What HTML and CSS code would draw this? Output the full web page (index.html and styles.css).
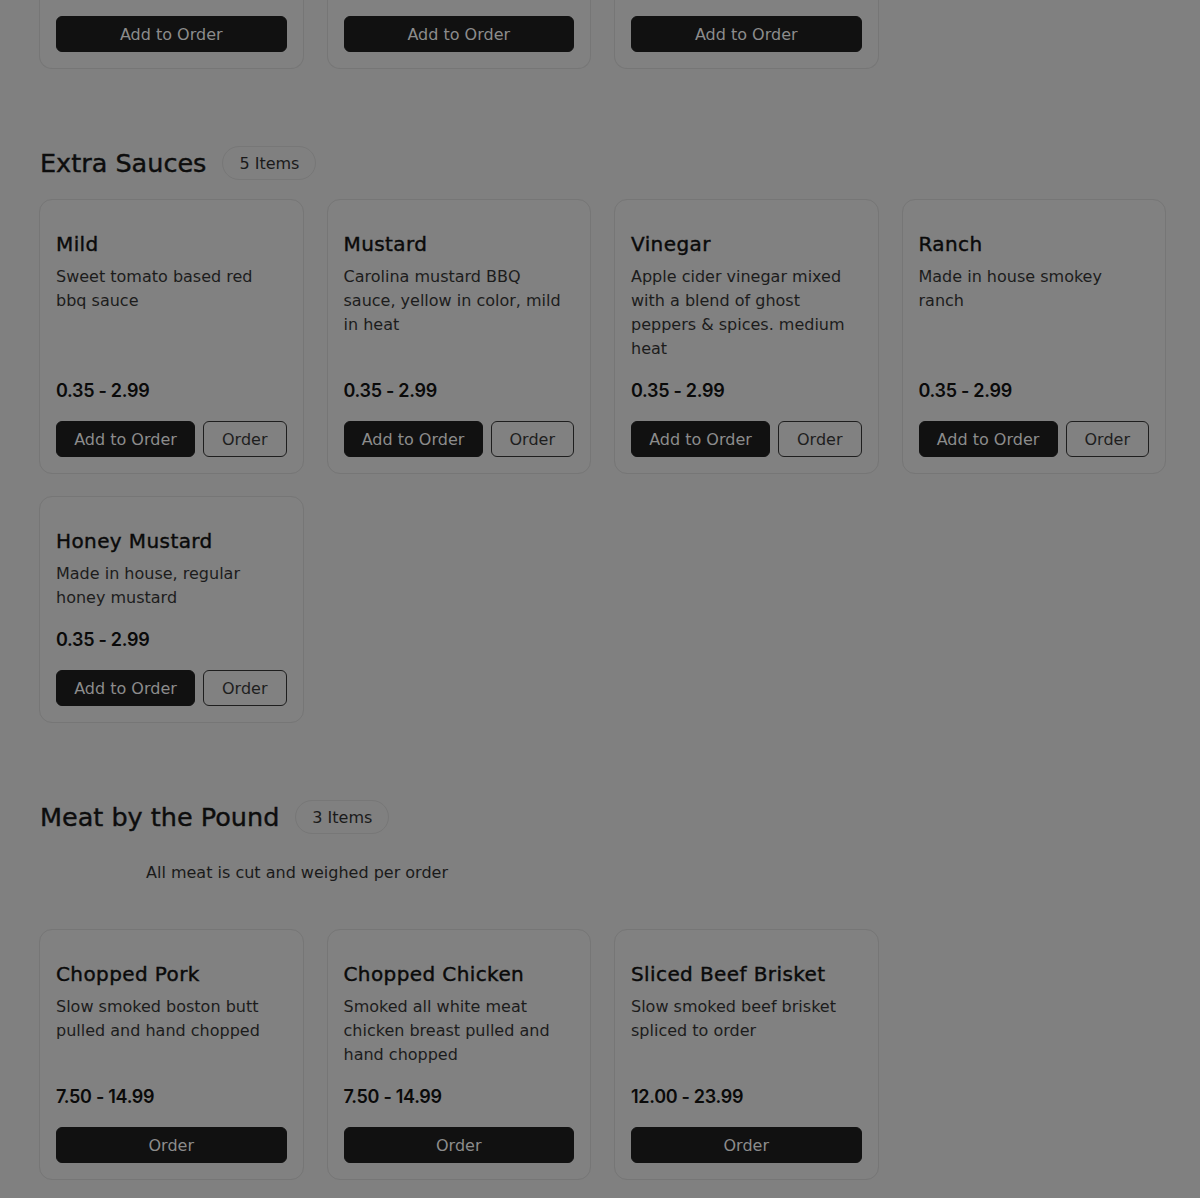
FILE: index.html
```html
<!DOCTYPE html>
<html lang="en">
<head>
<meta charset="utf-8">
<title>Menu</title>
<link rel="stylesheet" href="styles.css">
</head>
<body>
<main class="menu">
  <section class="section section-top">
    <div class="grid">
      <div class="card card-cut"><button class="btn btn-solid btn-full">Add to Order</button></div>
      <div class="card card-cut"><button class="btn btn-solid btn-full">Add to Order</button></div>
      <div class="card card-cut"><button class="btn btn-solid btn-full">Add to Order</button></div>
    </div>
  </section>

  <section class="section">
    <div class="section-head">
      <h2 class="section-title">Extra Sauces</h2>
      <span class="badge">5 Items</span>
    </div>
    <div class="grid">
      <article class="card">
        <h3 class="item-name">Mild</h3>
        <p class="item-desc">Sweet tomato based red bbq sauce</p>
        <div class="item-price">0.35 - 2.99</div>
        <div class="actions"><button class="btn btn-solid">Add to Order</button><button class="btn btn-outline">Order</button></div>
      </article>
      <article class="card">
        <h3 class="item-name">Mustard</h3>
        <p class="item-desc">Carolina mustard BBQ sauce, yellow in color, mild in heat</p>
        <div class="item-price">0.35 - 2.99</div>
        <div class="actions"><button class="btn btn-solid">Add to Order</button><button class="btn btn-outline">Order</button></div>
      </article>
      <article class="card">
        <h3 class="item-name">Vinegar</h3>
        <p class="item-desc">Apple cider vinegar mixed with a blend of ghost peppers &amp; spices. medium heat</p>
        <div class="item-price">0.35 - 2.99</div>
        <div class="actions"><button class="btn btn-solid">Add to Order</button><button class="btn btn-outline">Order</button></div>
      </article>
      <article class="card">
        <h3 class="item-name">Ranch</h3>
        <p class="item-desc">Made in house smokey ranch</p>
        <div class="item-price">0.35 - 2.99</div>
        <div class="actions"><button class="btn btn-solid">Add to Order</button><button class="btn btn-outline">Order</button></div>
      </article>
      <article class="card">
        <h3 class="item-name">Honey Mustard</h3>
        <p class="item-desc">Made in house, regular honey mustard</p>
        <div class="item-price">0.35 - 2.99</div>
        <div class="actions"><button class="btn btn-solid">Add to Order</button><button class="btn btn-outline">Order</button></div>
      </article>
    </div>
  </section>

  <section class="section">
    <div class="section-head">
      <h2 class="section-title">Meat by the Pound</h2>
      <span class="badge">3 Items</span>
    </div>
    <p class="section-note">All meat is cut and weighed per order</p>
    <div class="grid">
      <article class="card">
        <h3 class="item-name">Chopped Pork</h3>
        <p class="item-desc">Slow smoked boston butt pulled and hand chopped</p>
        <div class="item-price">7.50 - 14.99</div>
        <div class="actions actions-single"><button class="btn btn-solid btn-full">Order</button></div>
      </article>
      <article class="card">
        <h3 class="item-name">Chopped Chicken</h3>
        <p class="item-desc">Smoked all white meat chicken breast pulled and hand chopped</p>
        <div class="item-price">7.50 - 14.99</div>
        <div class="actions actions-single"><button class="btn btn-solid btn-full">Order</button></div>
      </article>
      <article class="card">
        <h3 class="item-name">Sliced Beef Brisket</h3>
        <p class="item-desc">Slow smoked beef brisket spliced to order</p>
        <div class="item-price">12.00 - 23.99</div>
        <div class="actions actions-single"><button class="btn btn-solid btn-full">Order</button></div>
      </article>
    </div>
  </section>
</main>
</body>
</html>
```
FILE: styles.css
```css
* { box-sizing: border-box; }
html, body { margin: 0; padding: 0; }
body {
  background: #808080;
  font-family: "DejaVu Sans", "Noto Sans", sans-serif;
  color: #0f0f0f;
  height: 1198px;
  overflow: hidden;
}
.menu {
  width: 1127px;
  margin-left: 39px;
}
.section { padding-top: 77px; }
.section-top { padding-top: 0; }
.grid {
  display: grid;
  grid-template-columns: repeat(4, 1fr);
  gap: 22px 23px;
}
.card {
  border: 1px solid #767676;
  border-radius: 13px;
  background: #818181;
  padding: 30px 16px 16px;
  display: flex;
  flex-direction: column;
}
.card-cut {
  border-top: none;
  border-top-left-radius: 0;
  border-top-right-radius: 0;
  padding-top: 16px;
}
.section-head {
  display: flex;
  align-items: center;
  gap: 16px;
  margin-bottom: 19px;
  padding-left: 1px;
}
.section-title {
  margin: 0;
  font-size: 25.5px;
  font-weight: 400;
  line-height: 34px;
  color: #0d0d0d;
  -webkit-text-stroke: 0.4px #0d0d0d;
}
.badge {
  display: inline-flex;
  align-items: center;
  height: 34px;
  padding: 0 16px;
  border: 1px solid #777;
  border-radius: 999px;
  font-size: 16px;
  color: #1a1a1a;
}
.section-note {
  margin: 27px 0 44px 107px;
  font-size: 16px;
  line-height: 24px;
  color: #1a1a1a;
}
.item-name {
  margin: 0;
  font-size: 20px;
  line-height: 28px;
  font-weight: 400;
  letter-spacing: 0.4px;
  color: #0a0a0a;
  -webkit-text-stroke: 0.4px #0a0a0a;
}
.item-desc {
  margin: 7px 0 0;
  font-size: 16px;
  line-height: 24px;
  color: #1c1c1c;
}
.item-price {
  margin-top: auto;
  padding-top: 18px;
  font-family: Inter, "DejaVu Sans", sans-serif;
  font-size: 18px;
  line-height: 24px;
  font-weight: 600;
  letter-spacing: -0.3px;
  color: #0a0a0a;
}
.actions {
  margin-top: 18px;
  display: grid;
  grid-template-columns: 139px 1fr;
  gap: 8px;
}
.actions-single { grid-template-columns: 1fr; }
.btn {
  height: 36px;
  border-radius: 6px;
  font-family: inherit;
  font-size: 16px;
  padding: 0;
  cursor: pointer;
}
.btn-solid {
  background: #111;
  border: 1px solid #111;
  color: #8c8c8c;
}
.btn-outline {
  background: transparent;
  border: 1px solid #1e1e1e;
  color: #1e1e1e;
}
.btn-full { width: 100%; }
```
